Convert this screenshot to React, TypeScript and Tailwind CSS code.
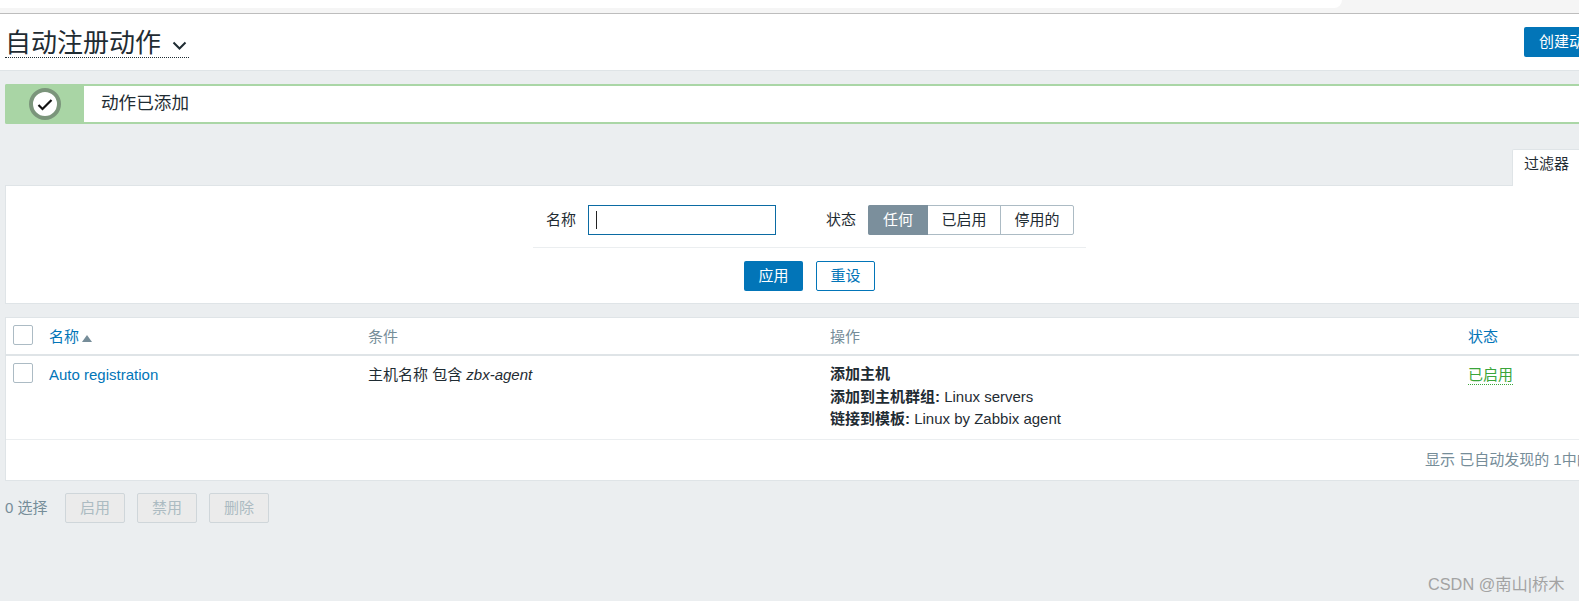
import React from "react";

const font = { fontFamily: '"Liberation Sans","Noto Sans CJK SC",sans-serif' };

function Box() {
  return <span className="block w-5 h-5 rounded-[2px] border border-[#acbbc4] bg-white" />;
}

function Ghost({ children }: { children: React.ReactNode }) {
  return (
    <button className="w-[60px] h-[30px] rounded-[2px] border border-[#cfd6da] bg-[#ebebeb] text-[15px] text-[#acbbc2]">
      {children}
    </button>
  );
}

export default function App() {
  return (
    <div style={font} className="relative w-[1579px] h-[601px] overflow-hidden bg-[#ebeef0] text-[#1f2c33]">
      <div className="h-[14px] bg-[#f5f5f5] border-b border-[#bdbdbd]">
        <div className="w-[1342px] h-[8px] bg-white rounded-br-[14px]" />
      </div>

      <header className="h-[57px] bg-white border-b border-[#dfe4e7] flex items-start justify-between pl-[5px] w-[1640px]">
        <div className="mt-[12px] h-[32px] w-[184px] border-b border-dotted border-[#1f2c33] flex items-center gap-[11px]">
          <span className="text-[26px] leading-[32px] whitespace-nowrap pt-[3px]">自动注册动作</span>
          <svg width="15" height="9" viewBox="0 0 15 9" className="mt-[8px] shrink-0" fill="none" stroke="#1f2c33" strokeWidth="2">
            <path d="M1.5 1.5 7.5 7.5 13.5 1.5" />
          </svg>
        </div>
        <button className="mt-[13px] w-[116px] h-[30px] rounded-[2px] bg-[#0275b8] text-white text-[15px] text-left pl-[15px] whitespace-nowrap">
          创建动作
        </button>
      </header>

      <div className="mt-[13px] ml-[5px] w-[1640px] h-[40px] flex rounded-[2px] border-2 border-l-0 border-[#aad6a6] bg-white">
        <div className="w-[79px] -my-[2px] rounded-l-[2px] bg-[#a9d5a5] flex items-center pl-[24px] shrink-0">
          <span className="w-8 h-8 rounded-full border-[4px] border-[#7b957b] bg-white flex items-center justify-center">
            <svg width="16" height="13" viewBox="0 0 16 13" fill="none" stroke="#111" strokeWidth="2.2">
              <path d="M1.5 7 5.5 11 14.5 2" />
            </svg>
          </span>
        </div>
        <div className="pl-[17px] text-[17.6px] leading-[35px]">动作已添加</div>
      </div>

      <div className="mt-[25px] ml-[5px] w-[1640px]">
        <div className="flex justify-end h-[36px]">
          <div className="w-[132px] mr-[1px] -mb-[1px] relative z-10 rounded-t-[2px] border border-b-0 border-[#dfe4e7] bg-white pl-[11px] text-[15px] leading-[27px]">
            过滤器
          </div>
        </div>
        <section className="h-[119px] border border-[#dfe4e7] bg-white">
          <div className="w-[1579px] flex flex-col">
            <div className="flex items-center h-[30px] mt-[19px] pl-[540px] text-[15px]">
              <span className="w-[42px] whitespace-nowrap">名称</span>
              <div className="w-[188px] h-[30px] border border-[#0b6ba3] flex items-center pl-[7px]">
                <span className="block w-px h-[18px] bg-[#222]" />
              </div>
              <span className="ml-[50px] w-[42px] whitespace-nowrap">状态</span>
              <div className="flex h-[30px] w-[206px] rounded-[2px] border border-[#acbbc4]">
                <span className="w-[60px] -my-px -ml-px bg-[#7b8f9c] text-white flex items-center justify-center rounded-l-[2px]">任何</span>
                <span className="w-[73px] border-r border-[#acbbc4] flex items-center justify-center">已启用</span>
                <span className="flex-1 flex items-center justify-center">停用的</span>
              </div>
            </div>
            <div className="ml-[527px] mt-[12px] w-[553px] h-px bg-[#ebeef0]" />
            <div className="mt-[13px] ml-[738px] flex gap-[13px]">
              <button className="w-[59px] h-[30px] rounded-[2px] bg-[#0275b8] text-white text-[15px]">应用</button>
              <button className="w-[59px] h-[30px] rounded-[2px] border border-[#0275b8] text-[#0275b8] text-[15px]">重设</button>
            </div>
          </div>
        </section>
      </div>

      <section className="mt-[13px] ml-[5px] w-[1640px] h-[164px] border border-[#dfe4e7] bg-white text-[15px]">
        <div className="grid grid-cols-[43px_319px_462px_638px_1fr] h-[38px] border-b-2 border-[#dfe4e7]">
          <div className="pl-[7px] pt-[7px]"><Box /></div>
          <div className="flex items-center gap-[3px] text-[#0275b8] pt-[2px]">
            名称
            <svg width="10" height="7" viewBox="0 0 10 7" className="mt-[2px]"><path d="M5 0 10 7H0Z" fill="#768d99" /></svg>
          </div>
          <div className="flex items-center text-[#768d99] pt-[2px]">条件</div>
          <div className="flex items-center text-[#768d99] pt-[2px]">操作</div>
          <div className="flex items-center text-[#0275b8] pt-[2px]">状态</div>
        </div>
        <div className="grid grid-cols-[43px_319px_462px_638px_1fr] h-[84px] border-b border-[#ebeef0]">
          <div className="pl-[7px] pt-[7px]"><Box /></div>
          <div className="pt-[10px] leading-[18px] text-[#0275b8]">Auto registration</div>
          <div className="pt-[10px] leading-[18px]">主机名称 包含 <em>zbx-agent</em></div>
          <div className="pt-[9px] leading-[22.5px] -mt-[2px]">
            <div className="font-bold">添加主机</div>
            <div><b>添加到主机群组:</b> Linux servers</div>
            <div><b>链接到模板:</b> Linux by Zabbix agent</div>
          </div>
          <div className="pt-[8px]">
            <span className="inline-block leading-[18px] text-[#3aa53a] border-b border-dotted border-[#3aa53a]">已启用</span>
          </div>
        </div>
        <div className="pl-[1419px] pt-[11px] leading-[18px] text-[#768d99] whitespace-nowrap">显示 已自动发现的 1中的1</div>
      </section>

      <div className="mt-[12px] ml-[5px] flex items-center text-[15px] text-[#768d99]">
        <span className="w-[60px]">0 选择</span>
        <div className="flex gap-[12px]">
          <Ghost>启用</Ghost>
          <Ghost>禁用</Ghost>
          <Ghost>删除</Ghost>
        </div>
      </div>

      <div className="absolute left-[1428px] top-[573px] text-[16.3px] leading-[22px] text-[#a3a3a3] whitespace-nowrap">
        CSDN @南山|桥木
      </div>
    </div>
  );
}
